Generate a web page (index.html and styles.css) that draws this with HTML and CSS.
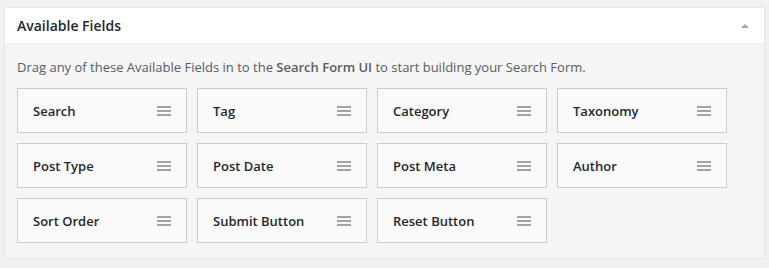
FILE: index.html
```html
<!doctype html>
<html>
<head>
<meta charset="utf-8">
<title>Available Fields</title>
<link rel="stylesheet" href="styles.css">
</head>
<body>
<div class="postbox">
	<div class="hndle">
		<h2>Available Fields</h2>
		<span class="toggle"></span>
	</div>
	<div class="inside">
		<p class="desc">Drag any of these Available Fields in to the <strong>Search Form UI</strong> to start building your Search Form.</p>
		<ul class="fields">
			<li><span>Search</span><i class="handle"></i></li>
			<li><span>Tag</span><i class="handle"></i></li>
			<li><span>Category</span><i class="handle"></i></li>
			<li><span>Taxonomy</span><i class="handle"></i></li>
			<li><span>Post Type</span><i class="handle"></i></li>
			<li><span>Post Date</span><i class="handle"></i></li>
			<li><span>Post Meta</span><i class="handle"></i></li>
			<li><span>Author</span><i class="handle"></i></li>
			<li><span>Sort Order</span><i class="handle"></i></li>
			<li><span>Submit Button</span><i class="handle"></i></li>
			<li><span>Reset Button</span><i class="handle"></i></li>
		</ul>
	</div>
</div>
</body>
</html>
```
FILE: styles.css
```css
*{margin:0; padding:0; list-style:none; box-sizing:border-box;}
body{background:#f1f1f1; padding:7px 4px 0 4px; font-family:"Open Sans", sans-serif; color:#23282d;}
.postbox{width:761px; background:#f5f5f5; border:1px solid #e5e5e5; box-shadow:0 1px 1px rgba(0,0,0,.04);}
.hndle{display:flex; align-items:center; justify-content:space-between; height:36px; padding:0 12px; background:#fff; border-bottom:1px solid #eee;}
.hndle h2{font-size:14px; font-weight:600; line-height:1.4;}
.toggle{width:0; height:0; margin-right:3px; border-left:4px solid transparent; border-right:4px solid transparent; border-bottom:4px solid #a0a5aa;}
.inside{padding:13px 12px 15px 12px;}
.desc{font-size:13px; line-height:20px; color:#555d66; margin-bottom:11px;}
.desc strong{font-weight:600; color:#555d66;}
.fields{display:grid; grid-template-columns:repeat(4,170px); gap:10px;}
.fields li{display:flex; align-items:center; justify-content:space-between; height:45px; padding:0 15px; background:#fafafa; border:1px solid #ccc; font-size:13px; font-weight:600;}
.handle{display:block; width:14px; height:10px; background:linear-gradient(#a0a5aa 0 2px, transparent 2px 4px, #a0a5aa 4px 6px, transparent 6px 8px, #a0a5aa 8px 10px);}
```
